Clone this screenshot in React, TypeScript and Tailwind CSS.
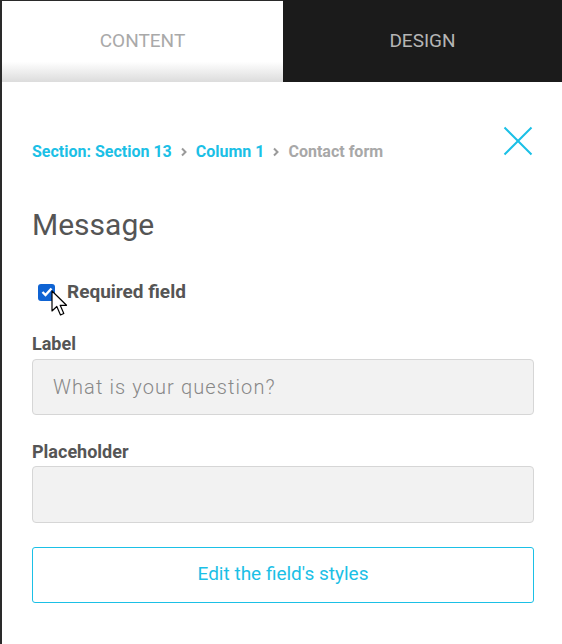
import React, { useState } from "react";

const CYAN = "text-[#1bc0e6]";

const Chevron: React.FC = () => (
  <svg width="8" height="10" viewBox="0 0 8 10" fill="none">
    <path d="M2 1.5 L5.5 5 L2 8.5" stroke="#9a9a9a" strokeWidth="2" />
  </svg>
);

const App: React.FC = () => {
  const [required, setRequired] = useState(true);
  const [label, setLabel] = useState("");
  const [placeholder, setPlaceholder] = useState("");

  return (
    <div
      className="w-[562px] h-[644px] bg-[#2a2a2a] pl-[2px] pt-[1px] overflow-hidden"
      style={{ fontFamily: "Roboto, 'Liberation Sans', sans-serif" }}
    >
      <div className="h-full bg-white flex flex-col">
        {/* Tabs */}
        <div className="flex h-[81px] shrink-0">
          <button className="w-[281px] bg-gradient-to-b from-white from-75% to-[#dcdcdc] text-[#a9a9a9] text-[19px] flex items-center justify-center">
            CONTENT
          </button>
          <button className="flex-1 bg-[#1b1b1b] -mt-[1px] text-[#b5b5b5] text-[19px] flex items-center justify-center">
            DESIGN
          </button>
        </div>

        <div className="pl-[30px] pr-[28px] pt-[44px] flex flex-col">
          {/* Breadcrumb */}
          <div className="flex items-start justify-between h-[30px]">
            <div className="flex items-center gap-[8px] text-[16px] font-bold mt-[14px]">
              <span className={CYAN}>Section: Section 13</span>
              <Chevron />
              <span className={CYAN}>Column 1</span>
              <Chevron />
              <span className="text-[#a8a8a8]">Contact form</span>
            </div>
            <button className="mr-[1px]">
              <svg width="30" height="30" viewBox="0 0 30 30" fill="none">
                <path d="M1.5 1.5 L28.5 28.5 M28.5 1.5 L1.5 28.5" stroke="#1bc0e6" strokeWidth="2" />
              </svg>
            </button>
          </div>

          {/* Heading */}
          <h2 className="mt-[51px] text-[30px] text-[#555] leading-[1.2]">Message</h2>

          {/* Checkbox */}
          <label className="mt-[35px] ml-[6px] flex items-center gap-[12px] cursor-pointer relative">
            <span
              className={`w-[17px] h-[17px] rounded-[3px] flex items-center justify-center ${
                required ? "bg-[#0f63d3]" : "bg-white border border-[#767676]"
              }`}
            >
              {required && (
                <svg width="12" height="10" viewBox="0 0 12 10" fill="none">
                  <path d="M1.5 5 L4.5 8 L10.5 1.5" stroke="white" strokeWidth="2.4" />
                </svg>
              )}
            </span>
            <input
              type="checkbox"
              checked={required}
              onChange={(e) => setRequired(e.target.checked)}
              className="hidden"
            />
            <span className="text-[19px] font-bold text-[#555]">Required field</span>
            {/* Mouse cursor */}
            <svg
              className="absolute left-[13px] top-[12px]"
              width="20"
              height="28"
              viewBox="0 0 20 28"
              fill="none"
            >
              <path
                d="M1 1 L1 21 L5.8 16.5 L9.5 25 L12.8 23.5 L9.2 15.3 L15.5 15.3 Z"
                fill="white"
                stroke="black"
                strokeWidth="1.2"
                strokeLinejoin="round"
              />
            </svg>
          </label>

          {/* Label field */}
          <div className="mt-[25px] text-[18px] font-bold text-[#555] leading-[24px]">Label</div>
          <input
            value={label}
            onChange={(e) => setLabel(e.target.value)}
            placeholder="What is your question?"
            className="mt-[3px] h-[56px] w-full rounded-[4px] bg-[#f2f2f2] border border-[#d6d6d6] px-[20px] text-[20px] font-light tracking-[1.1px] text-[#555] placeholder:text-[#888] outline-none"
          />

          {/* Placeholder field */}
          <div className="mt-[25px] text-[18px] font-bold text-[#555] leading-[24px]">Placeholder</div>
          <input
            value={placeholder}
            onChange={(e) => setPlaceholder(e.target.value)}
            className="mt-[2px] h-[57px] w-full rounded-[4px] bg-[#f2f2f2] border border-[#d6d6d6] px-[20px] text-[20px] font-light tracking-[1.1px] text-[#555] outline-none"
          />

          <button className="mt-[24px] h-[56px] w-full rounded-[3px] border border-[#1bc0e6] text-[19px] text-[#1bc0e6] bg-white">
            Edit the field&#39;s styles
          </button>
        </div>
      </div>
    </div>
  );
};

export default App;
